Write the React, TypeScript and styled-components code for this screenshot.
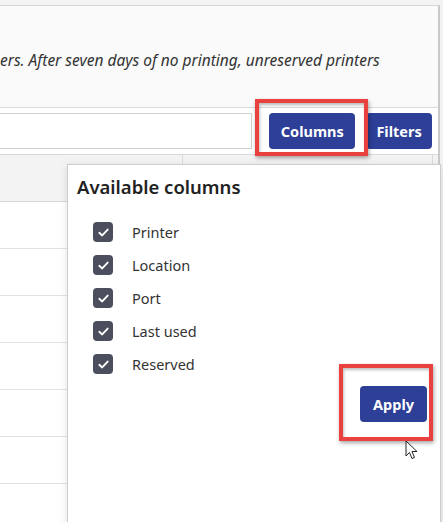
import React from "react";
import styled, { createGlobalStyle } from "styled-components";

const Global = createGlobalStyle`
  html, body { margin: 0; padding: 0; }
  body { font-family: "Noto Sans", "Open Sans", Arial, sans-serif; background: #f3f3f3; }
`;

const Page = styled.div`
  position: relative;
  width: 443px;
  height: 522px;
  overflow: hidden;
  background: #f3f3f3;
  padding-top: 5px;
  box-sizing: border-box;
`;

const Panel = styled.div`
  width: 440px;
  height: 517px;
  box-sizing: border-box;
  background: #fff;
  border-top: 1px solid #d6d6d6;
  border-right: 2px solid #c9c9c9;
  display: flex;
  flex-direction: column;
`;

const Info = styled.div`
  height: 102px;
  flex: none;
  background: #fafafa;
  border-bottom: 1px solid #d9d9d9;
  display: flex;
  align-items: center;
  box-sizing: border-box;
  padding-top: 7px;
`;

const InfoText = styled.p`
  margin: 0;
  font-style: italic;
  font-size: 15.5px;
  color: #333;
  white-space: nowrap;
`;

const Toolbar = styled.div`
  height: 47px;
  flex: none;
  display: flex;
  align-items: center;
  gap: 11px;
  padding-right: 6px;
  box-sizing: border-box;
  border-bottom: 1px solid #d9d9d9;
`;

const Search = styled.div`
  width: 253px;
  height: 36px;
  box-sizing: border-box;
  border: 1px solid #cfcfcf;
  border-left: none;
  margin-right: 6px;
  background: #fff;
`;

const Button = styled.button<{ $w: number }>`
  width: ${(p) => p.$w}px;
  height: 36px;
  border: none;
  border-radius: 4px;
  background: #2d3f96;
  color: #fff;
  font-family: "Noto Sans", "Open Sans", Arial, sans-serif;
  font-weight: 700;
  font-size: 14.5px;
  padding: 0;
  cursor: pointer;
`;

const HeaderRow = styled.div`
  height: 47px;
  flex: none;
  box-sizing: border-box;
  background: #f3f3f3;
  border-bottom: 1px solid #d9d9d9;
  display: grid;
  grid-template-columns: 183px 250px 1fr;
`;

const HeadCell = styled.div`
  border-right: 1px solid #dcdcdc;
  &:last-child { border-right: none; }
`;

const Row = styled.div`
  height: 47px;
  flex: none;
  box-sizing: border-box;
  border-bottom: 1px solid #e3e3e3;
`;

const Popup = styled.div`
  position: absolute;
  left: 67px;
  top: 164px;
  width: 374px;
  height: 380px;
  box-sizing: border-box;
  background: #fff;
  border: 1px solid #cdcdcd;
  box-shadow: 0 2px 8px rgba(0, 0, 0, 0.12);
  padding: 10px 0 0 9px;
  display: flex;
  flex-direction: column;
`;

const Title = styled.h2`
  margin: 0;
  font-size: 18.5px;
  font-weight: 600;
  color: #222;
  line-height: 24px;
`;

const List = styled.div`
  display: flex;
  flex-direction: column;
  gap: 13px;
  margin-top: 23px;
  padding-left: 16px;
`;

const Item = styled.label`
  display: flex;
  align-items: center;
  gap: 19px;
  height: 20px;
  font-size: 14.5px;
  color: #333;
`;

const Box = styled.span`
  width: 20px;
  height: 20px;
  border-radius: 4px;
  background: #4b4e5c;
  display: flex;
  align-items: center;
  justify-content: center;
  flex: none;
`;

const Actions = styled.div`
  display: flex;
  justify-content: flex-end;
  padding-right: 13px;
  margin-top: 12px;
`;

const Highlight = styled.div<{ $l: number; $t: number; $w: number; $h: number }>`
  position: absolute;
  left: ${(p) => p.$l}px;
  top: ${(p) => p.$t}px;
  width: ${(p) => p.$w}px;
  height: ${(p) => p.$h}px;
  box-sizing: border-box;
  border: 4px solid #e8413f;
  box-shadow: 1px 2px 4px rgba(0, 0, 0, 0.35), inset 1px 2px 3px rgba(0, 0, 0, 0.25);
  pointer-events: none;
`;

const Cursor = styled.svg`
  position: absolute;
  left: 405px;
  top: 440px;
`;

const Check = () => (
  <svg width="13" height="13" viewBox="0 0 14 14">
    <path d="M2.5 7.3 L5.6 10.2 L11.5 3.8" fill="none" stroke="#fff" strokeWidth="2" strokeLinecap="round" strokeLinejoin="round" />
  </svg>
);

const columns = ["Printer", "Location", "Port", "Last used", "Reserved"];

export default function App() {
  return (
    <>
      <Global />
      <Page>
        <Panel>
          <Info>
            <InfoText>ers. After seven days of no printing, unreserved printers</InfoText>
          </Info>
          <Toolbar>
            <Search />
            <Button $w={86}>Columns</Button>
            <Button $w={66}>Filters</Button>
          </Toolbar>
          <HeaderRow>
            <HeadCell />
            <HeadCell />
            <HeadCell />
          </HeaderRow>
          {Array.from({ length: 7 }).map((_, i) => (
            <Row key={i} />
          ))}
        </Panel>
        <Popup>
          <Title>Available columns</Title>
          <List>
            {columns.map((c) => (
              <Item key={c}>
                <Box>
                  <Check />
                </Box>
                {c}
              </Item>
            ))}
          </List>
          <Actions>
            <Button $w={67}>Apply</Button>
          </Actions>
        </Popup>
        <Highlight $l={255} $t={99} $w={113} $h={57} />
        <Highlight $l={339} $t={364} $w={94} $h={77} />
        <Cursor width="14" height="22" viewBox="0 0 14 22">
          <path d="M1 1 L1 16 L4.5 12.5 L7 18.5 L9.5 17.5 L7 11.5 L12 11.5 Z" fill="#fff" stroke="#222" strokeWidth="1" strokeLinejoin="round" />
        </Cursor>
      </Page>
    </>
  );
}
